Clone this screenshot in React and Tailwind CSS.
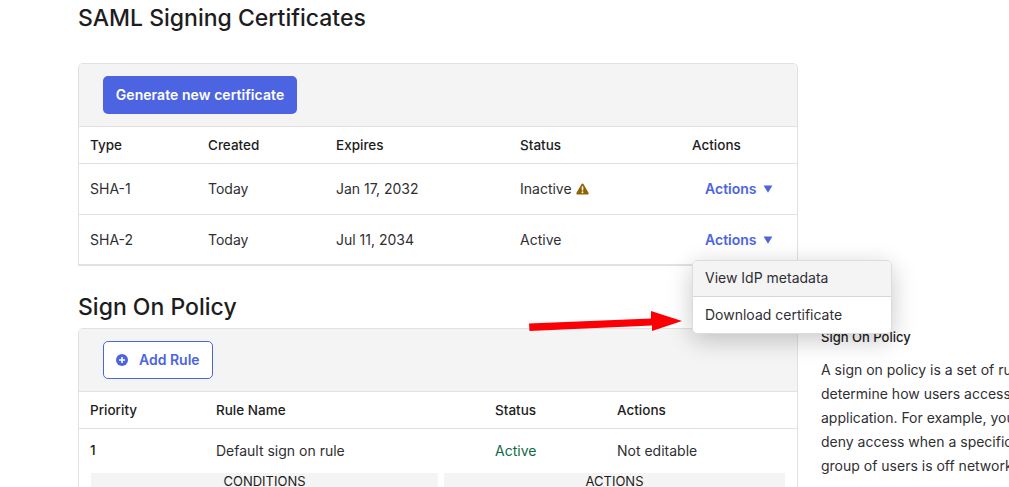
const H = "font-medium text-[13.5px] text-[#1d1d21]";
const T = "text-[14px] text-[#2f2f33]";
function Warn() {
  return (
    <svg width="13" height="12" viewBox="0 0 13 12" className="ml-[4px]">
      <path d="M6.5 0.6c.5 0 .9.3 1.2.8l4.8 8.3c.5.9-.1 1.9-1.1 1.9H1.6c-1 0-1.6-1-1.1-1.9l4.8-8.3c.3-.5.7-.8 1.2-.8z" fill="#8f6400" />
      <rect x="5.7" y="3.2" width="1.6" height="4.4" rx=".6" fill="#fff" />
      <circle cx="6.5" cy="9.2" r="0.95" fill="#fff" />
    </svg>
  );
}
function ActionsLink() {
  return (
    <div className="flex items-center pl-[13px] text-[14px] font-semibold text-[#4c64e1]">
      Actions
      <svg width="10" height="8" viewBox="0 0 10 8" className="ml-[6px]"><path d="M0.6 0.6h8.8L5 7.8z" fill="#4c64e1" /></svg>
    </div>
  );
}
function CertRow({ type, created, expires, status, warn, last }) {
  return (
    <div className={"grid grid-cols-[118px_128px_184px_172px_1fr] items-center h-[51px] pl-[11px] border-[#e1e1e1] " + (last ? "border-b-2" : "border-b pb-[1px]")}>
      <div className={T}>{type}</div>
      <div className={T}>{created}</div>
      <div className={T}>{expires}</div>
      <div className={"flex items-center " + T}>{status}{warn && <Warn />}</div>
      <ActionsLink />
    </div>
  );
}
export default function App() {
  return (
    <div className="relative w-[1009px] h-[487px] overflow-hidden bg-white font-['Inter',sans-serif]">
      <div className="flex pl-[78px]">
        <div className="w-[720px] shrink-0 flex flex-col">
          <h1 className="text-[23px] leading-[36px] font-medium text-[#1d1d21] whitespace-nowrap">SAML Signing Certificates</h1>
          <div className="mt-[27px] rounded-t-[5px] border border-[#e1e1e1] border-b-0">
            <div className="h-[63px] bg-[#f4f4f4] border-b border-[#e1e1e1] pl-[24px] pt-[12px] rounded-t-[5px]">
              <button className="h-[38px] w-[194px] pb-[1px] rounded-[5px] bg-[#4c64e1] text-white text-[14px] font-semibold tracking-[0.06px]">Generate new certificate</button>
            </div>
            <div className="grid grid-cols-[118px_128px_184px_172px_1fr] items-center h-[37px] pl-[11px] border-b border-[#e1e1e1]">
              <div className={H}>Type</div>
              <div className={H}>Created</div>
              <div className={H}>Expires</div>
              <div className={H}>Status</div>
              <div className={H}>Actions</div>
            </div>
            <CertRow type="SHA-1" created="Today" expires="Jan 17, 2032" status="Inactive" warn />
            <CertRow type="SHA-2" created="Today" expires="Jul 11, 2034" status="Active" last />
          </div>
          <h2 className="mt-[21px] mb-[1px] text-[23px] leading-[40px] font-medium text-[#1d1d21]">Sign On Policy</h2>
          <div className="rounded-t-[5px] border border-[#e1e1e1] border-b-0 h-[200px] overflow-hidden">
            <div className="h-[63px] bg-[#f4f4f4] border-b border-[#e1e1e1] pl-[24px] pt-[12px]">
              <button className="flex items-center h-[38px] w-[110px] pb-[1px] rounded-[5px] border border-[#4c64e1] bg-white text-[#4c64e1] text-[14px] font-semibold pl-[12px]">
                <svg width="12" height="12" viewBox="0 0 12 12" className="mr-[11px]">
                  <circle cx="6" cy="6" r="6" fill="#4c64e1" />
                  <path d="M6 3v6M3 6h6" stroke="#fff" strokeWidth="1.6" />
                </svg>
                Add Rule
              </button>
            </div>
            <div className="grid grid-cols-[126px_279px_122px_1fr] items-center h-[37px] pl-[11px] border-b border-[#e1e1e1]">
              <div className={H}>Priority</div>
              <div className={H}>Rule Name</div>
              <div className={H}>Status</div>
              <div className={H}>Actions</div>
            </div>
            <div className="grid grid-cols-[126px_279px_122px_1fr] items-center h-[44px] pb-[2px] pl-[11px]">
              <div className={H}>1</div>
              <div className={T}>Default sign on rule</div>
              <div className="text-[14px] text-[#0d6b45]">Active</div>
              <div className={T}>Not editable</div>
            </div>
            <div className="flex gap-[6px] pl-[12px]">
              <div className="w-[347px] bg-[#f4f4f4] text-center text-[13px] leading-[16px] h-[20px] text-[#1d1d21]">CONDITIONS</div>
              <div className="w-[341px] bg-[#f4f4f4] text-center text-[13px] leading-[16px] h-[20px] text-[#1d1d21]">ACTIONS</div>
            </div>
          </div>
        </div>
        <div className="ml-[23px] pt-[326px] shrink-0">
          <h3 className="text-[13px] leading-[22px] font-medium text-[#1d1d21]">Sign On Policy</h3>
          <div className="mt-[10px] text-[14px] leading-[24px] text-[#2f2f33] whitespace-nowrap">
            <p>A sign on policy is a set of rules that</p>
            <p>determine how users access an</p>
            <p>application. For example, you can</p>
            <p>deny access when a specific</p>
            <p>group of users is off network</p>
          </div>
        </div>
      </div>

      <div className="absolute left-[692px] top-[260px] w-[200px] h-[74px] bg-white rounded-[5px] border border-[#dcdcdc] shadow-[0_6px_24px_rgba(0,0,0,0.22)] overflow-hidden text-[14px] text-[#2f2f33]">
        <div className="h-[36px] pb-[2px] bg-[#f4f4f4] border-b border-[#d6d6d6] pl-[12px] flex items-center">View IdP metadata</div>
        <div className="h-[36px] pb-[1px] pl-[12px] flex items-center">Download certificate</div>
      </div>

      <svg className="absolute left-[525px] top-[305px]" width="160" height="32" viewBox="0 0 160 32">
        <path d="M4 18.5L126 13.5V6L157 16L127 26V20.5L4.5 26z" fill="#fd0006" />
      </svg>
    </div>
  );
}
